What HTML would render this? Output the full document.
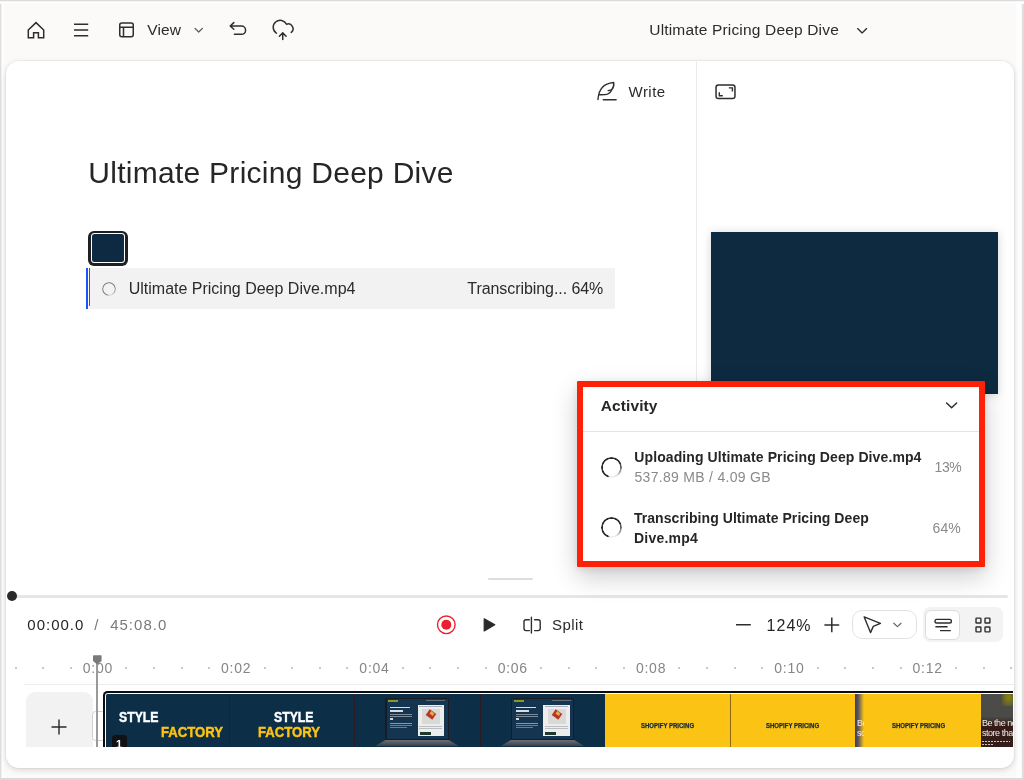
<!DOCTYPE html>
<html>
<head>
<meta charset="utf-8">
<title>Ultimate Pricing Deep Dive</title>
<style>
*{box-sizing:border-box;margin:0;padding:0}
html,body{width:1024px;height:780px;overflow:hidden}
body{position:relative;background:#fbfaf9;font-family:"Liberation Sans",sans-serif;color:#2b2b2b;-webkit-font-smoothing:antialiased}
.abs{position:absolute}
.t{position:absolute;white-space:nowrap;line-height:1}
svg{position:absolute;overflow:visible}
.frame-t{left:0;top:0;width:1024px;height:4px;background:linear-gradient(#dadada 0,#dedede 1.2px,#fefefe 1.6px,#fefefe 3.2px,#fbfaf9 4px)}
.frame-l{left:0;top:0;width:4px;height:780px;background:linear-gradient(90deg,#dcdcdc 0,#e2e2e2 1.3px,#fefefe 1.7px,#fefefe 3px,#fbfaf9 4px)}
.frame-r{left:1016.4px;top:0;width:7.6px;height:780px;background:linear-gradient(90deg,#fbfaf9 0,#fefefe 0.8px,#fefefe 5.4px,#e2e2e2 5.8px,#dcdcdc 7.6px)}
.frame-b{left:0;top:777.6px;width:1024px;height:2.4px;background:#dadada}
#card{left:6px;top:61px;width:1008px;height:707px;background:#fff;border-radius:13px;box-shadow:0 0 0 1px rgba(0,0,0,0.035),0 2px 6px rgba(0,0,0,0.14);overflow:hidden}

.spin-s{width:14px;height:14px;border-radius:50%;background:conic-gradient(from 200deg,#8a8a8a 0deg,#8a8a8a 230deg,rgba(138,138,138,0.15) 330deg,#8a8a8a 360deg);-webkit-mask:radial-gradient(circle,transparent 5.4px,#000 5.9px);mask:radial-gradient(circle,transparent 5.4px,#000 5.9px)}
.spin-l{width:20.5px;height:20.5px;border-radius:50%;background:conic-gradient(from 205deg,#2b2b2b 0deg,#2b2b2b 215deg,rgba(43,43,43,0.10) 305deg,rgba(43,43,43,0.06) 345deg,#2b2b2b 357deg);-webkit-mask:radial-gradient(circle,transparent 8.35px,#000 8.95px);mask:radial-gradient(circle,transparent 8.35px,#000 8.95px)}

.rl{top:661.2px;width:40px;text-align:center;font-size:14px;letter-spacing:0.75px;color:#868686;text-indent:0.75px}
.rd{top:667px;width:2px;height:2px;border-radius:50%;background:#b9b9b9}
.sf{font-weight:700;-webkit-text-stroke:0.45px currentColor;transform:scaleX(0.875);transform-origin:0 0}
.sp{font-size:6.7px;font-weight:700;color:#102840;letter-spacing:0;-webkit-text-stroke:0.25px #102840;transform:scaleX(0.9);transform-origin:0 0}
</style>
</head>
<body>
<div class="abs frame-l"></div><div class="abs frame-r"></div><div class="abs frame-t"></div><div class="abs frame-b"></div>

<!-- TOPBAR -->
<div id="topbar" style="position:absolute;left:0;top:0;width:1024px;height:60px;will-change:transform">
<svg width="1024" height="60" style="left:0;top:0" fill="none" stroke="#2e2e2e" stroke-width="1.5" stroke-linecap="round" stroke-linejoin="round">
  <!-- home -->
  <path d="M28.3 30 L36 22.6 L43.7 30 V37.8 H38.4 V32.7 H33.6 V37.8 H28.3 Z" stroke-linejoin="miter"/>
  <!-- hamburger -->
  <path d="M74 24.3 H88.2 M74 30 H88.2 M74 35.7 H88.2" stroke-linecap="butt"/>
  <!-- layout -->
  <rect x="119.75" y="23.05" width="13.5" height="13.7" rx="2"/>
  <path d="M119.75 27.2 H133.25 M123.5 27.2 V36.75" stroke-linecap="butt"/>
  <!-- chevron view -->
  <path d="M195 28.4 L198.7 32 L202.4 28.4" stroke="#5a5a5a" stroke-width="1.3"/>
  <!-- undo -->
  <path d="M233.8 22.6 L230.2 25.95 L233.8 29.3 M230.4 25.95 H241.4 a4.2 4.2 0 0 1 0 8.4 H234.4"/>
  <!-- cloud upload -->
  <path d="M276.34 33.14 A7 7 0 1 1 286.53 24.3 A4.7 4.7 0 0 1 291.2 32.35"/>
  <path d="M282.75 39.5 V33 M279.4 36.2 L282.75 32.9 L286.1 36.2"/>
  <!-- title chevron -->
  <path d="M857.6 28.6 L862.1 32.9 L866.6 28.6" stroke-width="1.35"/>
</svg>
<div class="t" style="left:147.3px;top:22.0px;font-size:15.5px;letter-spacing:0.12px">View</div>
<div class="t" style="left:649.3px;top:22.3px;font-size:15.5px;letter-spacing:0.17px">Ultimate Pricing Deep Dive</div>
</div>

<!-- CARD -->
<div id="card" class="abs">
<div id="ci" class="abs" style="left:-6px;top:-61px;width:1024px;height:780px;will-change:transform">
<!-- doc header -->
<svg width="1024" height="120" style="left:0;top:0" fill="none" stroke="#2e2e2e" stroke-width="1.4" stroke-linecap="round" stroke-linejoin="round">
  <path d="M598 99.5 C598.3 96.5 598.6 94.5 599.3 92.5 C600.8 88.5 603 85.8 606.5 84.3 C609 83.2 611.5 82.7 613.7 82.5 C614.1 85.2 613.6 87.6 611.6 89.9 C611 91.6 609.5 93.4 607.5 94.2 C605.5 94.9 602.5 94.8 599.3 94.8"/>
  <path d="M611.6 89.9 L608.2 90.6"/>
  <path d="M603.3 99.7 H616.1"/>
  <rect x="716.05" y="84.95" width="18.9" height="13.6" rx="2.3" stroke-width="1.5"/>
  <path d="M728.8 87.9 H732.4 V91.6 M719.3 92.2 V95.7 H722.8" stroke-width="1.4" stroke-linecap="butt" stroke-linejoin="miter"/>
</svg>
<div class="t" style="left:628.6px;top:84.3px;font-size:15px;letter-spacing:0.44px">Write</div>
<div class="abs" style="left:696px;top:61px;width:1px;height:500px;background:#ebebeb"></div>

<!-- document -->
<div class="t" style="left:88.3px;top:158.2px;font-size:30px;letter-spacing:0.27px;color:#262626">Ultimate Pricing Deep Dive</div>
<div class="abs" style="left:88px;top:230.5px;width:40px;height:35px;border-radius:6px;background:#1f2022"></div>
<div class="abs" style="left:90.6px;top:233.1px;width:34.8px;height:29.8px;border-radius:3.5px;background:#fff"></div>
<div class="abs" style="left:91.8px;top:234.3px;width:32.4px;height:27.4px;border-radius:2.5px;background:#0e2a42"></div>
<div class="abs" style="left:90.3px;top:268px;width:524.7px;height:41px;background:#f2f2f2"></div>
<div class="abs" style="left:86px;top:268.4px;width:2.2px;height:40.8px;background:#1a56ff"></div>
<div class="abs" style="left:89px;top:267.6px;width:1.3px;height:38px;background:#1a56ff"></div>
<div class="abs spin-s" style="left:102px;top:281.8px"></div>
<div class="t" style="left:128.7px;top:281.3px;font-size:16px;letter-spacing:0px">Ultimate Pricing Deep Dive.mp4</div>
<div class="t" style="left:467.3px;top:281.3px;font-size:16px;letter-spacing:-0.07px">Transcribing... 64%</div>

<!-- preview -->
<div class="abs" style="left:711px;top:232px;width:287px;height:162px;background:#0d2a41;box-shadow:0 1px 9px rgba(0,0,0,0.17)"></div>

<!-- timeline -->
<div class="abs" style="left:487.5px;top:578px;width:45px;height:2px;border-radius:1px;background:#dddddd"></div>
<div class="abs" style="left:12px;top:594.5px;width:996px;height:3.2px;border-radius:2px;background:#e6e6e6"></div>
<div class="abs" style="left:6.6px;top:590.8px;width:10.4px;height:10.4px;border-radius:50%;background:#2a2a2a"></div>
<div class="t" style="left:27.3px;top:617.2px;font-size:15px;letter-spacing:1.0px;color:#262626">00:00.0</div>
<div class="t" style="left:94.3px;top:617.2px;font-size:15px;color:#7a7a7a">/</div>
<div class="t" style="left:110.2px;top:617.2px;font-size:15px;letter-spacing:1.0px;color:#7a7a7a">45:08.0</div>
<svg width="1024" height="60" style="left:0;top:600px" fill="none" stroke="#2e2e2e" stroke-width="1.5" stroke-linecap="round" stroke-linejoin="round">
  <circle cx="446.3" cy="24.8" r="8.8" stroke="#e8202f" stroke-width="1.4"/>
  <circle cx="446.3" cy="24.8" r="5" fill="#e8202f" stroke="none"/>
  <path d="M484.2 18.8 L494.8 24.8 L484.2 30.9 Z" fill="#2a2a2a" stroke="#2a2a2a" stroke-width="1.2"/>
  <path d="M529.3 19.7 H526 a2 2 0 0 0 -2 2 V28.6 a2 2 0 0 0 2 2 H529.3 M531.4 17.2 V33 M534.6 19.7 H538.2 a2 2 0 0 1 2 2 V28.6 a2 2 0 0 1 -2 2 H534.6" stroke-width="1.4"/>
  <path d="M736 24.8 H750.8 M824.4 24.9 H839.2 M831.8 17.6 V32.2" stroke-linecap="butt"/>
</svg>
<div class="t" style="left:552px;top:616.9px;font-size:15px;letter-spacing:0.42px">Split</div>
<div class="t" style="left:766.6px;top:618.2px;font-size:16px;letter-spacing:1.0px;color:#262626">124%</div>
<div class="abs" style="left:852px;top:610px;width:64.5px;height:29px;border-radius:10px;border:1px solid #e2e2e2;background:#fff"></div>
<div class="abs" style="left:923px;top:607px;width:80px;height:35px;border-radius:7px;background:#f3f3f3"></div>
<div class="abs" style="left:924.9px;top:610px;width:35.1px;height:29.5px;border-radius:6px;border:1px solid #dcdcdc;background:#fff"></div>
<svg width="200" height="60" style="left:840px;top:600px" fill="none" stroke="#2e2e2e" stroke-width="1.4" stroke-linecap="round" stroke-linejoin="round">
  <path d="M24.2 16.9 L40.4 23.4 L33.3 26.4 L30.5 32.6 Z" stroke-width="1.4"/>
  <path d="M53.8 23.2 L57.4 26.6 L61 23.2" stroke="#666" stroke-width="1.2"/>
  <rect x="95" y="19.4" width="16.4" height="3.6" rx="1.8"/>
  <path d="M95.4 26.7 H107.6 M100 30.6 H110.8" stroke-linecap="butt"/>
  <rect x="136" y="18.1" width="4.9" height="4.9" rx="0.6"/>
  <rect x="145" y="18.1" width="4.9" height="4.9" rx="0.6"/>
  <rect x="136" y="27" width="4.9" height="4.9" rx="0.6"/>
  <rect x="145" y="27" width="4.9" height="4.9" rx="0.6"/>
</svg>
<!-- ruler -->
<div class="abs rd" style="left:14.5px"></div>
<div class="abs rd" style="left:42.2px"></div>
<div class="abs rd" style="left:69.8px"></div>
<div class="t rl" style="left:77.5px">0:00</div>
<div class="abs rd" style="left:125.2px"></div>
<div class="abs rd" style="left:152.8px"></div>
<div class="abs rd" style="left:180.5px"></div>
<div class="abs rd" style="left:208.1px"></div>
<div class="t rl" style="left:215.8px">0:02</div>
<div class="abs rd" style="left:263.5px"></div>
<div class="abs rd" style="left:291.1px"></div>
<div class="abs rd" style="left:318.8px"></div>
<div class="abs rd" style="left:346.4px"></div>
<div class="t rl" style="left:354.1px">0:04</div>
<div class="abs rd" style="left:401.8px"></div>
<div class="abs rd" style="left:429.4px"></div>
<div class="abs rd" style="left:457.1px"></div>
<div class="abs rd" style="left:484.7px"></div>
<div class="t rl" style="left:492.4px">0:06</div>
<div class="abs rd" style="left:540.1px"></div>
<div class="abs rd" style="left:567.7px"></div>
<div class="abs rd" style="left:595.4px"></div>
<div class="abs rd" style="left:623.0px"></div>
<div class="t rl" style="left:630.7px">0:08</div>
<div class="abs rd" style="left:678.4px"></div>
<div class="abs rd" style="left:706.0px"></div>
<div class="abs rd" style="left:733.7px"></div>
<div class="abs rd" style="left:761.3px"></div>
<div class="t rl" style="left:769.0px">0:10</div>
<div class="abs rd" style="left:816.7px"></div>
<div class="abs rd" style="left:844.3px"></div>
<div class="abs rd" style="left:872.0px"></div>
<div class="abs rd" style="left:899.6px"></div>
<div class="t rl" style="left:907.3px">0:12</div>
<div class="abs rd" style="left:955.0px"></div>
<div class="abs rd" style="left:982.6px"></div>
<div class="abs rd" style="left:1010.3px"></div>
<div class="abs" style="left:24px;top:683.8px;width:990px;height:1.5px;background:#ececec"></div>
<!-- track -->
<div id="track" class="abs" style="left:0;top:686px;width:1024px;height:60.7px;overflow:hidden">
<div class="abs" style="left:0;top:-686px;width:1024px;height:780px">
<div class="abs" style="left:26px;top:692.3px;width:66.5px;height:70px;border-radius:9px;background:#f2f2f2"></div>
<svg width="30" height="30" style="left:44px;top:712px" fill="none" stroke="#2a2a2a" stroke-width="1.4"><path d="M7.5 15 H22.5 M15 7.5 V22.5"/></svg>
<div class="abs" style="left:92.4px;top:711.3px;width:14px;height:29.6px;border-radius:3.5px;border:1px solid #cfcfcf;background:#fff"></div>
<div class="abs" style="left:103px;top:690.6px;width:910.2px;height:70px;border-radius:4.5px 0 0 0;background:#0b0d10"></div>
<div class="abs" style="left:104.9px;top:692.6px;width:908.3px;height:70px;border-radius:3px 0 0 0;background:#fff"></div>
<div class="abs" style="left:106px;top:693.9px;width:123.6px;height:60px;border-radius:1.5px 0 0 0;background:#0c2e47"></div>
<div class="abs" style="left:229px;top:693.9px;width:126px;height:60px;background:#0c2e47"></div>
<div class="t sf" style="left:119.2px;top:710.4px;font-size:14px;color:#fff;letter-spacing:0px">STYLE</div>
<div class="t sf" style="left:161.3px;top:724.0px;font-size:15px;color:#fbc414;letter-spacing:0px">FACTORY</div>
<div class="t sf" style="left:273.9px;top:710.4px;font-size:14px;color:#fff;letter-spacing:0px">STYLE</div>
<div class="t sf" style="left:258px;top:724.0px;font-size:15px;color:#fbc414;letter-spacing:0px">FACTORY</div>
<div class="abs" style="left:354.4px;top:693.9px;width:125.5px;height:54px;background:#0c2e47"></div>
<div class="abs" style="left:385.4px;top:697.5px;width:63.4px;height:42.5px;background:#171c24;border-radius:2px 2px 0 0"></div>
<div class="abs" style="left:386.59999999999997px;top:699px;width:61px;height:40px;background:#14344f"></div>
<div class="abs" style="left:375.4px;top:740px;width:83.4px;height:6px;background:linear-gradient(#6c7076,#3c4046);clip-path:polygon(12% 0,88% 0,100% 100%,0 100%)"></div>
<div class="abs" style="left:388.2px;top:699.6px;width:10px;height:2px;background:#7f9a2a"></div>
<div class="abs" style="left:426.4px;top:700.2px;width:19px;height:1px;background:#5b6b7a"></div>
<div class="abs" style="left:390.4px;top:706.6px;width:20px;height:1.6px;background:#d5dce2"></div>
<div class="abs" style="left:390.4px;top:710px;width:13px;height:1.6px;background:#d5dce2"></div>
<div class="abs" style="left:390.4px;top:714px;width:22px;height:1px;background:#7d8b98"></div>
<div class="abs" style="left:390.4px;top:716px;width:22px;height:1px;background:#7d8b98"></div>
<div class="abs" style="left:390.4px;top:718.4px;width:3px;height:2px;background:#cfd6dc"></div>
<div class="abs" style="left:390.4px;top:723.4px;width:22px;height:1px;background:#8b98a4"></div>
<div class="abs" style="left:390.4px;top:725.4px;width:22px;height:1px;background:#6f7d8a"></div>
<div class="abs" style="left:390.4px;top:727.4px;width:17px;height:1px;background:#6f7d8a"></div>
<div class="abs" style="left:417.79999999999995px;top:704.6px;width:26.5px;height:31.4px;background:#ecedec"></div>
<div class="abs" style="left:419.4px;top:706px;width:23px;height:1px;background:#aab0b5"></div>
<div class="abs" style="left:422.4px;top:708.7px;width:18px;height:15px;background:#d9d9d6"></div>
<div class="abs" style="left:427.4px;top:711px;width:8px;height:7px;background:#b8352a;transform:rotate(35deg)"></div>
<div class="abs" style="left:430.4px;top:712px;width:4px;height:3px;background:#e0b040;transform:rotate(35deg)"></div>
<div class="abs" style="left:419.4px;top:726px;width:23px;height:1px;background:#b9bec2"></div>
<div class="abs" style="left:419.4px;top:728px;width:23px;height:1px;background:#b9bec2"></div>
<div class="abs" style="left:419.7px;top:731.8px;width:11px;height:3px;background:#1d3a2a"></div>
<div class="abs" style="left:479.8px;top:693.9px;width:125.5px;height:54px;background:#0c2e47"></div>
<div class="abs" style="left:510.8px;top:697.5px;width:63.4px;height:42.5px;background:#171c24;border-radius:2px 2px 0 0"></div>
<div class="abs" style="left:512.0px;top:699px;width:61px;height:40px;background:#14344f"></div>
<div class="abs" style="left:500.8px;top:740px;width:83.4px;height:6px;background:linear-gradient(#6c7076,#3c4046);clip-path:polygon(12% 0,88% 0,100% 100%,0 100%)"></div>
<div class="abs" style="left:513.6px;top:699.6px;width:10px;height:2px;background:#7f9a2a"></div>
<div class="abs" style="left:551.8px;top:700.2px;width:19px;height:1px;background:#5b6b7a"></div>
<div class="abs" style="left:515.8px;top:706.6px;width:20px;height:1.6px;background:#d5dce2"></div>
<div class="abs" style="left:515.8px;top:710px;width:13px;height:1.6px;background:#d5dce2"></div>
<div class="abs" style="left:515.8px;top:714px;width:22px;height:1px;background:#7d8b98"></div>
<div class="abs" style="left:515.8px;top:716px;width:22px;height:1px;background:#7d8b98"></div>
<div class="abs" style="left:515.8px;top:718.4px;width:3px;height:2px;background:#cfd6dc"></div>
<div class="abs" style="left:515.8px;top:723.4px;width:22px;height:1px;background:#8b98a4"></div>
<div class="abs" style="left:515.8px;top:725.4px;width:22px;height:1px;background:#6f7d8a"></div>
<div class="abs" style="left:515.8px;top:727.4px;width:17px;height:1px;background:#6f7d8a"></div>
<div class="abs" style="left:543.2px;top:704.6px;width:26.5px;height:31.4px;background:#ecedec"></div>
<div class="abs" style="left:544.8px;top:706px;width:23px;height:1px;background:#aab0b5"></div>
<div class="abs" style="left:547.8px;top:708.7px;width:18px;height:15px;background:#d9d9d6"></div>
<div class="abs" style="left:552.8px;top:711px;width:8px;height:7px;background:#b8352a;transform:rotate(35deg)"></div>
<div class="abs" style="left:555.8px;top:712px;width:4px;height:3px;background:#e0b040;transform:rotate(35deg)"></div>
<div class="abs" style="left:544.8px;top:726px;width:23px;height:1px;background:#b9bec2"></div>
<div class="abs" style="left:544.8px;top:728px;width:23px;height:1px;background:#b9bec2"></div>
<div class="abs" style="left:545.1px;top:731.8px;width:11px;height:3px;background:#1d3a2a"></div>
<div class="abs" style="left:604.8px;top:693.9px;width:377.4px;height:60px;background:#fbc414"></div>
<div class="t sp" style="left:641px;top:722.6px">SHOPIFY PRICING</div>
<div class="t sp" style="left:766.4px;top:722.6px">SHOPIFY PRICING</div>
<div class="t sp" style="left:891.9px;top:722.6px">SHOPIFY PRICING</div>
<div class="abs" style="left:855.4px;top:693.9px;width:9px;height:60px;background:linear-gradient(90deg,#3b3f52 0%,#5a5560 35%,rgba(251,196,20,0) 100%)"></div>
<div class="t" style="left:857px;top:718.6px;font-size:9px;color:#e8e8ee;letter-spacing:-0.4px;width:6.5px;overflow:hidden">Be</div>
<div class="t" style="left:857px;top:728.6px;font-size:9px;color:#e8e8ee;letter-spacing:-0.4px;width:6.5px;overflow:hidden">sc</div>
<div class="abs" style="left:980.9px;top:693.9px;width:32.3px;height:60px;background:linear-gradient(180deg,#4b4b49 0%,#4a4a47 38%,#3e302b 46%,#351a15 52%,#33201b 100%)"></div>
<div class="abs" style="left:1002px;top:693.9px;width:11.2px;height:12px;background:radial-gradient(ellipse at 60% 30%,#8a8416 0%,#6f6b22 45%,rgba(74,74,71,0) 100%)"></div>
<div class="t" style="left:981.9px;top:719.3px;font-size:9px;color:#f4ecea;letter-spacing:-0.45px">Be the ne</div>
<div class="t" style="left:981.9px;top:728.7px;font-size:9px;color:#f4ecea;letter-spacing:-0.45px">store tha</div>
<div class="abs" style="left:981.8px;top:740.6px;width:28px;height:1.6px;background:repeating-linear-gradient(90deg,#cfc4bd 0 2.2px,rgba(0,0,0,0) 2.2px 3px)"></div>
<div class="abs" style="left:981.8px;top:743.7px;width:12px;height:1.6px;background:repeating-linear-gradient(90deg,#cfc4bd 0 2.2px,rgba(0,0,0,0) 2.2px 3px)"></div>
<div class="abs" style="left:228.6px;top:693.9px;width:1px;height:60px;background:#3b1620"></div>
<div class="abs" style="left:354px;top:693.9px;width:1px;height:60px;background:#2a1a24"></div>
<div class="abs" style="left:479.6px;top:693.9px;width:1px;height:60px;background:#2a1a24"></div>
<div class="abs" style="left:729.9px;top:693.9px;width:1px;height:60px;background:#8d6a12"></div>
<div class="abs" style="left:111.6px;top:734.6px;width:15px;height:20px;border-radius:3.5px;background:#101216"></div>
<div class="t" style="left:116px;top:739.2px;font-size:11px;font-weight:700;color:#fff">1</div>
</div>
</div>
<!-- playhead -->
<div class="abs" style="left:96.3px;top:660px;width:1.9px;height:86.6px;background:#9a9a9a"></div>
<div class="abs" style="left:93px;top:655.2px;width:8.6px;height:9.4px;background:#7a7a7a;clip-path:polygon(0 0,100% 0,100% 62%,50% 100%,0 62%);border-radius:1px"></div>

</div>
</div>

<!-- OVERLAYS -->
<div id="overlay" style="position:absolute;left:0;top:0;width:1024px;height:780px;will-change:transform">
<div class="abs" style="left:577.2px;top:381.2px;width:407.8px;height:185.8px;background:#fb2208;border-radius:1px;box-shadow:0 10px 26px rgba(0,0,0,0.20),0 2px 8px rgba(0,0,0,0.10)"></div>
<div class="abs" style="left:582.9px;top:386.7px;width:396.5px;height:174.8px;background:#fff"></div>
<div class="abs" style="left:583px;top:431px;width:396.4px;height:1px;background:#e4e4e4"></div>
<div class="t" style="left:600.8px;top:397.8px;font-size:15.5px;font-weight:700;letter-spacing:0.1px;color:#262626">Activity</div>
<svg width="20" height="12" style="left:942px;top:399px" fill="none" stroke="#2e2e2e" stroke-width="1.5" stroke-linecap="round" stroke-linejoin="round"><path d="M4.6 4 L9.6 8.8 L14.6 4"/></svg>
<div class="abs spin-l" style="left:601px;top:457px"></div>
<div class="t" style="left:634.3px;top:450.3px;font-size:14px;font-weight:700;letter-spacing:0.1px;color:#262626">Uploading Ultimate Pricing Deep Dive.mp4</div>
<div class="t" style="left:634.5px;top:470.0px;font-size:14px;letter-spacing:0.3px;color:#8a8a8a">537.89 MB / 4.09 GB</div>
<div class="t" style="left:934.6px;top:460.4px;font-size:14px;letter-spacing:-0.4px;color:#8a8a8a">13%</div>
<div class="abs spin-l" style="left:601px;top:517.2px"></div>
<div class="t" style="left:633.9px;top:510.5px;font-size:14px;font-weight:700;letter-spacing:0.07px;color:#262626">Transcribing Ultimate Pricing Deep</div>
<div class="t" style="left:633.9px;top:530.6px;font-size:14px;font-weight:700;letter-spacing:0.25px;color:#262626">Dive.mp4</div>
<div class="t" style="left:932.6px;top:520.6px;font-size:14px;color:#8a8a8a">64%</div>
</div>
</body>
</html>
